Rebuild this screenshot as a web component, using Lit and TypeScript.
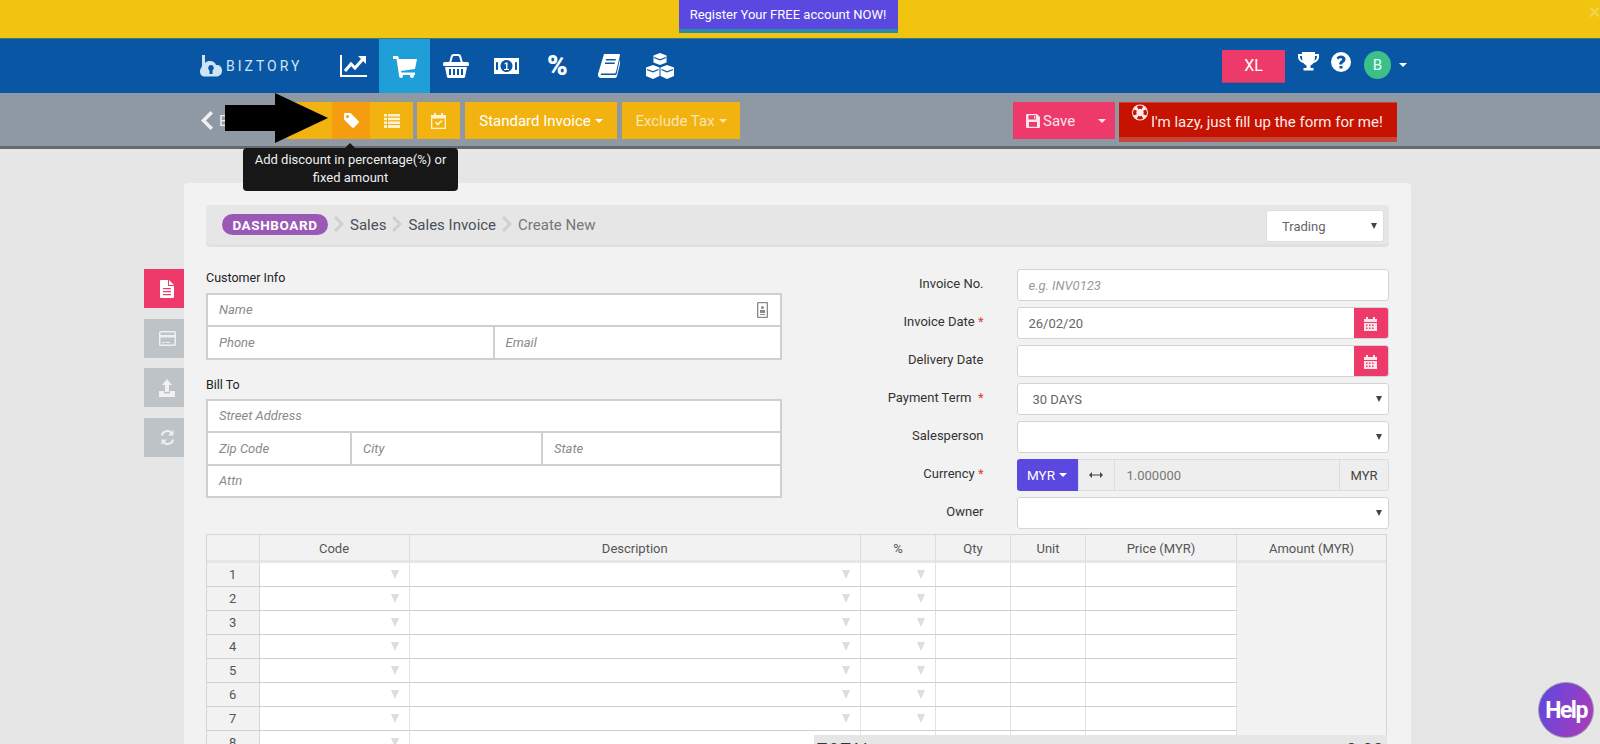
import { LitElement, html, css, svg } from "lit";
import { customElement } from "lit/decorators.js";

const ic = (w: number, h: number, vb: string, body: unknown) =>
  html`<svg width=${w} height=${h} viewBox=${vb} fill="currentColor" aria-hidden="true">${body}</svg>`;

const caret = html`<span class="caret"></span>`;
const tri = html`<span class="tri"></span>`;
const calendar = ic(13, 15, "0 0 13 15", svg`<path d="M0 3h2V1h2v2h5V1h2v2h2v3H0z"/><path fill-rule="evenodd" d="M0 7h13v8H0zM2 8.500v1.500h1.500V8.500zm3 0v1.500h1.500V8.500zm3 0v1.500h1.500V8.500zM2 11.500V13h1.500v-1.500zm3 0V13h1.500v-1.500zm3 0V13h1.500v-1.500z"/>`);
const chevron = html`<svg class="crumb-chev" width="10" height="16" viewBox="0 0 10 16"><path d="M1 1l7 7-7 7" fill="none" stroke="#cfcfcf" stroke-width="3"/></svg>`;

const navIcons = [
  ic(27, 24, "0 0 27 24", svg`<path d="M1 1v21h26" fill="none" stroke="currentColor" stroke-width="2"/><path d="M5 17l6-7 4 4 8-9" fill="none" stroke="currentColor" stroke-width="3"/><path d="M18 2h8v8z"/>`),
  ic(24, 23, "0 0 24 23", svg`<path d="M0 1h5l1 3h18l-2 10-14 2 .4 1.500H22V20H6L3.500 4H0z"/><circle cx="8" cy="21" r="2"/><circle cx="19" cy="21" r="2"/>`),
  ic(26, 24, "0 0 26 24", svg`<path d="M7 9l2-7a2 2 0 0 1 2-1h4a2 2 0 0 1 2 1l2 7" fill="none" stroke="currentColor" stroke-width="2"/><rect x="0" y="8" width="26" height="4" rx="1.500"/><path fill-rule="evenodd" d="M2 13h22l-2 10a1.500 1.500 0 0 1-1.500 1h-15A1.500 1.500 0 0 1 4 23zm4 2v6h2v-6zm4 0v6h2v-6zm4 0v6h2v-6zm4 0v6h2v-6z"/>`),
  ic(25, 16, "0 0 25 16", svg`<path fill-rule="evenodd" d="M0 0h25v16H0zM12.500 2C9 2 6.500 4.700 6.500 8s2.500 6 6 6 6-2.700 6-6-2.500-6-6-6zM2 4v8a3 3 0 0 1 2 0V4a3 3 0 0 1-2 0zm19 0v8a3 3 0 0 1 2 0V4a3 3 0 0 1-2 0z"/><path d="M12 4.500h1.500v6.500H15v1h-5v-1h2V6l-1.500.5v-1z"/>`),
  html`<span class="pct">%</span>`,
  ic(22, 24, "0 0 22 24", svg`<path fill-rule="evenodd" d="M6 0h15c1 0 1 1 1 1l-4 17c-.3 1-1 1.500-2 1.500H4c-1 0-1.500 1-1 1.500h14l1.500-.5L22 5l1 1-4 16c-.2 1-1 2-2 2H3c-2 0-3.500-2-3-4zM8 5v1.500h9.500L18 5zm-1 3.500V10h9.500l.5-1.500z"/>`),
  ic(28, 26, "0 0 28 26", svg`<path d="M14 0l6.500 2.500v7L14 12l-6.500-2.500v-7z"/><path d="M7 12l6.500 2.500v8.500L7 26 0 23v-8.500z"/><path d="M21 12l7 2.500V23l-7 3-6.500-3v-8.500z"/><path d="M8 4.500l6 2.300 6-2.300M1 16.500l6 2.300 5.500-2.300M15.500 16.500l5.500 2.300 6-2.300" stroke="#0957a4" fill="none" stroke-width="1.200"/>`),
];

const sideIcons = [
  ic(14, 18, "0 0 14 18", svg`<path d="M9 0l5 5H9z"/><path fill-rule="evenodd" d="M1 0h7v6h6v11a1 1 0 0 1-1 1H1a1 1 0 0 1-1-1V1a1 1 0 0 1 1-1zm2 8v1.200h8V8zm0 3v1.200h8V11zm0 3v1.200h8V14z"/>`),
  ic(17, 15, "0 0 17 15", svg`<path fill-rule="evenodd" d="M1.500 0h14A1.500 1.500 0 0 1 17 1.500v12a1.500 1.500 0 0 1-1.500 1.500h-14A1.500 1.500 0 0 1 0 13.500v-12A1.500 1.500 0 0 1 1.500 0zM1.500 1.500V4h14V1.500zm0 5v7h14v-7zM3 11h3v1H3zm4 0h4v1H7z"/>`),
  ic(16, 18, "0 0 16 18", svg`<path d="M8 0l5 6h-3v7H6V6H3zM0 12h5v2.500h6V12h5v6H0z"/>`),
  ic(15, 17, "0 0 15 17", svg`<path d="M13.500 1v5.500H8l2.200-2.200C9.500 3.500 8.600 3 7.500 3 5.200 3 3.500 4.500 3 6.500H.8C1.300 3.300 4.100 1 7.500 1c1.700 0 3.300.7 4.400 1.800zM1.500 16v-5.500H7l-2.200 2.200c.7.8 1.600 1.300 2.700 1.300 2.300 0 4-1.500 4.500-3.500h2.200C13.700 13.700 10.900 16 7.500 16c-1.700 0-3.300-.7-4.400-1.800z"/>`),
];

@customElement("app-root")
export class AppRoot extends LitElement {
  static styles = css`
    :host { display: block; height: 744px; overflow: hidden; background: #e6e6e6; font-family: Roboto, "Liberation Sans", sans-serif; position: relative; color: #333; }
    * { box-sizing: border-box; }
    .banner { height: 38px; background: #f1c40f; display: flex; justify-content: center; position: relative; }
    .register { width: 219px; height: 33px; background: #5b48e0; border-bottom: 4px solid #2b8aa8; color: #fff; font-size: 13px; display: flex; align-items: center; justify-content: center; margin-right: 24px; }
    .close { position: absolute; right: -1px; top: 3px; color: #f4d34e; font-size: 16px; font-weight: 700; }
    .nav { height: 55px; background: #0957a4; border-top: 1px solid #3f7a78; display: flex; align-items: center; padding-left: 200px; padding-right: 193px; color: #fff; }
    .logo { width: 128px; display: flex; align-items: center; gap: 3px; color: #cfe5f5; height: 100%; }
    .logo span { font-size: 14px; letter-spacing: 3px; font-weight: 400; }
    .cell { width: 51px; height: 100%; display: flex; align-items: center; justify-content: center; }
    .cell.on { background: #1f9ed8; }
    .pct { font-size: 28px; font-weight: 900; line-height: 1; }
    .nav-r { margin-left: auto; display: flex; align-items: center; }
    .xl { width: 63px; height: 33px; background: #ee3a6a; border-bottom: 1px solid #b83a70; color: #fff; font-size: 16px; display: flex; align-items: center; justify-content: center; }
    .trophy { margin-left: 13px; margin-top: -8px; display: flex; }
    .help-ic { margin-left: 12px; margin-top: -8px; display: flex; }
    .avatar { margin-left: 13px; width: 27px; height: 28px; border-radius: 50%; background: #3dbf8a; color: #e8fff4; font-size: 15px; display: flex; align-items: center; justify-content: center; margin-top: -2px; }
    .nav-r .caret { margin-left: 8px; margin-top: -2px; }
    .caret { display: inline-block; width: 0; height: 0; border-left: 4px solid transparent; border-right: 4px solid transparent; border-top: 4px solid currentColor; margin-left: 4px; vertical-align: middle; }

    .bar { height: 56px; background: #8e99a4; border-bottom: 3px solid #67696b; padding: 9px 203px 0 201px; display: flex; align-items: flex-start; color: #fff; }
    .back { width: 86px; height: 37px; display: flex; align-items: center; gap: 6px; font-size: 15px; color: #eef0f2; }
    .btn { height: 37px; background: #f2b310; color: #fdf3d4; display: flex; align-items: center; justify-content: center; font-size: 15px; }
    .group { display: flex; }
    .g0 { width: 45px; } .g1 { width: 38px; background: #f59c0f; color: #fff; } .g2 { width: 43px; }
    .cal { width: 43px; margin-left: 4px; }
    .std { width: 152px; margin-left: 5px; color: #fff; }
    .exc { width: 118px; margin-left: 5px; color: #f8e6b4; }
    .save { width: 102px; margin-left: auto; height: 37px; background: #ee3a6a; display: flex; align-items: center; padding-left: 13px; font-size: 15px; gap: 3px; color: #fbe4ea; }
    .save .caret { margin-left: auto; margin-right: 9px; }
    .lazy { width: 278px; height: 40px; margin-left: 4px; background: #c61200; border-bottom: 5px solid #c8453a; border-top: 1px solid #c8453a; display: flex; align-items: flex-start; padding: 1px 0 0 13px; font-size: 15px; color: #fbeae8; }
    .lazy span { margin: 9px 0 0 3px; white-space: nowrap; }

    .main { display: flex; padding: 34px 0 0 144px; }
    .tabs { width: 40px; padding-top: 86px; display: flex; flex-direction: column; gap: 10.500px; }
    .tab { height: 39px; background: #bdc3c7; color: #eef0f1; display: flex; align-items: center; justify-content: center; padding-left: 6px; }
    .tab.on { background: #ee3a6a; color: #fff; }
    .card { width: 1227px; height: 600px; background: #f2f2f2; border-radius: 4px 4px 0 0; padding: 22px 22px 0; }
    .crumbs { height: 42px; background: #e6e6e6; border-bottom: 3px solid #e0e0e0; border-radius: 4px; display: flex; align-items: center; padding: 0 5px 0 16px; font-size: 15px; color: #4a5058; }
    .pill { width: 106px; height: 21px; border-radius: 11px; background: #9b59b6; color: #fff; font-size: 13.500px; font-weight: 700; letter-spacing: .6px; display: flex; align-items: center; justify-content: center; margin-right: 6px; }
    .crumb-chev { margin: 0 6px 2px 0; flex: none; }
    .crumbs .s { margin-right: 6px; }
    .crumbs .s2 { margin-right: 6px; }
    .crumbs .last { color: #777; }
    .trade { margin-left: auto; margin-top: 3px; width: 118px; height: 32px; background: #fff; border: 1px solid #ddd; border-radius: 3px; display: flex; align-items: center; padding: 0 6px 0 15px; font-size: 13px; color: #666; justify-content: space-between; }
    .tri { width: 0; height: 0; border-left: 3px solid transparent; border-right: 3px solid transparent; border-top: 6px solid #444; }

    .forms { display: flex; justify-content: space-between; margin-top: 22px; height: 260px; margin-bottom: 5px; }
    .left { width: 576px; }
    .lab { font-size: 12.500px; color: #222; height: 23.500px; display: flex; align-items: center; padding-bottom: 7px; }
    .lab.b { margin-top: 16.500px; height: 16px; padding: 0; }
    .box { background: #cfcfcf; padding: 2px; display: flex; flex-direction: column; gap: 2px; }
    .box.bill { margin-top: 6.500px; }
    .rw { display: flex; gap: 2px; }
    .f { height: 30.500px; background: #fff; display: flex; align-items: center; padding: 0 11px; font-size: 13px; font-style: italic; color: #8a8a8a; flex: 1 1 0; justify-content: space-between; min-width: 0; }
    .box > .f { flex: none; }
    .phone { flex: 0 0 284.500px; } .zip { flex: 0 0 142px; } .city { flex: 0 0 189px; }
    .contact { color: #8a8a8a; margin-right: 1px; display: flex; }
    .right { width: 529px; display: grid; grid-template-columns: 123.500px 372.500px; column-gap: 33px; grid-auto-rows: 32px; row-gap: 6px; align-items: center; }
    .rl { text-align: right; font-size: 13px; color: #333; white-space: pre; padding-bottom: 3px; }
    .rl b { color: #e03a3a; font-weight: 400; }
    .inp { height: 32px; background: #fff; border: 1px solid #d4d4d4; border-radius: 3px; display: flex; align-items: center; font-size: 13px; color: #666; padding-left: 11px; overflow: hidden; }
    .inp.ph { font-style: italic; color: #9a9a9a; }
    .inp.sel { padding: 0 6px 0 15px; justify-content: space-between; }
    .inp.date { padding-right: 0; justify-content: space-between; }
    .calbtn { width: 35px; height: 32px; background: #ee3a6a; color: #fbe4ea; display: flex; align-items: center; justify-content: center; flex: none; margin-right: -1px; padding-right: 3px; }
    .cur { display: flex; height: 32px; border-radius: 3px; overflow: hidden; font-size: 13px; }
    .cur .m { width: 61px; background: #5b48e0; color: #fff; display: flex; align-items: center; justify-content: center; font-size: 13.500px; }
    .cur .x { width: 37px; background: #eee; border: 1px solid #ddd; display: flex; align-items: center; justify-content: center; color: #444; }
    .cur .r { flex: 1; background: #eee; border-top: 1px solid #ddd; border-bottom: 1px solid #ddd; display: flex; align-items: center; padding-left: 12px; color: #777; }
    .cur .u { width: 50px; background: #eee; border: 1px solid #ddd; display: flex; align-items: center; justify-content: center; color: #444; }

    .table { width: 1181px; border: 1px solid #d6d6d6; border-bottom: 0; position: relative; }
    .tr { display: grid; grid-template-columns: 52.500px 150px 451.500px 75px 75px 75px 151px 1fr; }
    .th { height: 27.500px; border-bottom: 3px solid #e6e6e6; border-right: 1px solid #dcdcdc; display: flex; align-items: center; justify-content: center; font-size: 13px; color: #555; background: #f2f2f2; padding-top: 2px; }
    .th:last-child { border-right: 0; }
    .td { height: 24.100px; border-bottom: 1px solid #cfcfcf; border-right: 1px solid #e2e2e2; background: #fff; display: flex; align-items: center; justify-content: flex-end; padding-right: 10px; }
    .td .tri { border-top-color: #ddd; border-left-width: 4px; border-right-width: 4px; border-top-width: 9px; }
    .td.n { background: #f2f2f2; border-right-color: #d6d6d6; justify-content: center; padding: 0; font-size: 13px; color: #555; }
    .td.a { background: #f2f2f2; border-bottom: 0; border-right: 0; }
    .total { position: absolute; left: 607px; right: -1px; top: 200px; height: 30px; background: #e6e6e6; display: flex; justify-content: space-between; padding: 4px 3px 0 3px; font-size: 17px; color: #333; letter-spacing: 1px; }

    .arrow { position: absolute; left: 225px; top: 93px; }
    .tip { position: absolute; left: 243px; top: 148px; width: 215px; height: 43px; background: #171717; border-radius: 4px; color: #eee; font-size: 13px; line-height: 18px; text-align: center; padding: 3px 8px; }
    .tip::before { content: ""; position: absolute; left: 102px; top: -5px; border-left: 5px solid transparent; border-right: 5px solid transparent; border-bottom: 5px solid #171717; }
    .helpb { position: absolute; left: 1538px; top: 682px; width: 56px; height: 56px; border-radius: 50%; background: linear-gradient(110deg, #5b48e0, #b03ab8); border: 1px solid #9a9aa8; color: #fff; font-size: 23px; font-weight: 700; letter-spacing: -1.500px; display: flex; align-items: center; justify-content: center; }
  `;

  render() {
    const rows = [1, 2, 3, 4, 5, 6, 7, 8];
    return html`
      <div class="banner"><div class="register">Register Your FREE account NOW!</div><span class="close">✕</span></div>
      <div class="nav">
        <div class="logo">
          ${ic(23, 22, "0 0 23 22", svg`<path fill-rule="evenodd" d="M2 0h3v8c1.500-1.500 3-2 5-2 3 0 5 1.500 6 4 3-.5 6 1.500 6 5.500 0 3.500-2 6-6 6H5c-3 0-5-2-5-5 0-2 1-4 2-5zM11 10a3 3 0 0 0-1.500 5.500V19h3v-3.500A3 3 0 0 0 11 10z"/>`)}
          <span>BIZTORY</span>
        </div>
        ${navIcons.map((i, n) => html`<div class="cell ${n === 1 ? "on" : ""}">${i}</div>`)}
        <div class="nav-r">
          <div class="xl">XL</div>
          <div class="trophy">${ic(21, 20, "0 0 21 20", svg`<path fill-rule="evenodd" d="M4 0h13v2h4v3c0 3-3 5.500-5.500 6-.8 1-1.800 2-3 2.500V16h3v2.500H5.500V16h3v-2.500c-1.200-.5-2.200-1.500-3-2.500C3 10.500 0 8 0 5V2h4zM2 4v1c0 1.500 1.200 3 2.700 3.700C4.200 7.500 4 5.800 4 4zm15 0c0 1.800-.2 3.500-.7 4.700C17.800 8 19 6.500 19 5V4z"/>`)}</div>
          <div class="help-ic">${ic(20, 20, "0 0 20 20", svg`<path fill-rule="evenodd" d="M10 0a10 10 0 1 1 0 20 10 10 0 0 1 0-20zM8.500 14v2.500h3V14zM10 3.500C7.800 3.500 6.300 4.500 5.500 6l2 1.500c.5-.8 1.200-1.300 2.200-1.300.9 0 1.500.5 1.500 1.100 0 1.500-3 1.700-3 4.700v.5h3c0-2 3.300-2 3.300-5.300 0-2.500-2.200-3.700-4.500-3.700z"/>`)}</div>
          <div class="avatar">B</div>
          ${caret}
        </div>
      </div>
      <div class="bar">
        <div class="back">
          ${ic(12, 19, "0 0 12 19", svg`<path d="M9.500 0L12 2.500 5 9.500l7 7L9.500 19 0 9.500z"/>`)}
          <span>Back</span>
        </div>
        <div class="group">
          <div class="btn g0"></div>
          <div class="btn g1">${ic(15, 15, "0 0 15 15", svg`<path fill-rule="evenodd" d="M1 0h5.500L14.500 8a1.500 1.500 0 0 1 0 2l-4.500 4.500a1.500 1.500 0 0 1-2 0L0 6.500V1a1 1 0 0 1 1-1zm2.500 2a1.500 1.500 0 1 0 0 3 1.500 1.500 0 0 0 0-3z"/>`)}</div>
          <div class="btn g2">${ic(16, 14, "0 0 16 14", svg`<path d="M0 0h3v2.500H0zM4 0h12v2.500H4zM0 3.700h3v2.500H0zM4 3.700h12v2.500H4zM0 7.400h3v2.500H0zM4 7.400h12v2.500H4zM0 11.100h3V14H0zM4 11.100h12V14H4z"/>`)}</div>
        </div>
        <div class="btn cal">${ic(15, 16, "0 0 15 16", svg`<path fill-rule="evenodd" d="M0 2h3V0h2v2h5V0h2v2h3v14H0zM1.300 5.500v9.200h12.400V5.500zM4 9.500l1-1 1.800 1.800L10.500 7l1 1-4.700 4.700z"/>`)}</div>
        <div class="btn std">Standard Invoice${caret}</div>
        <div class="btn exc">Exclude Tax${caret}</div>
        <div class="save">
          ${ic(14, 14, "0 0 14 14", svg`<path fill-rule="evenodd" d="M1 0h10l3 3v10a1 1 0 0 1-1 1H1a1 1 0 0 1-1-1V1a1 1 0 0 1 1-1zm1.500 1.300v4.200h7.500V1.300zM3 8v4.700h8V8zm5-6h1.300v2.500H8z"/>`)}
          Save${caret}
        </div>
        <div class="lazy">
          ${ic(16, 17, "0 0 16 17", svg`<path fill-rule="evenodd" d="M8 .5a8 8 0 1 1 0 16 8 8 0 0 1 0-16zm-3 1.800 1.200 3a3.500 3.500 0 0 1 3.600 0l1.200-3a6.500 6.500 0 0 0-6 0zM1.800 5.500l3 1.200a3.500 3.500 0 0 0 0 3.600l-3 1.200a6.500 6.500 0 0 1 0-6zm12.400 0a6.500 6.500 0 0 1 0 6l-3-1.200a3.500 3.500 0 0 0 0-3.600zM6.200 11.700l-1.200 3a6.500 6.500 0 0 0 6 0l-1.200-3a3.500 3.500 0 0 1-3.600 0z"/>`)}
          <span>I'm lazy, just fill up the form for me!</span>
        </div>
      </div>
      <div class="main">
        <div class="tabs">${sideIcons.map((i, n) => html`<div class="tab ${n === 0 ? "on" : ""}">${i}</div>`)}</div>
        <div class="card">
          <div class="crumbs">
            <div class="pill">DASHBOARD</div>${chevron}
            <span class="s">Sales</span>${chevron}
            <span class="s2">Sales Invoice</span>${chevron}
            <span class="last">Create New</span>
            <div class="trade">Trading${tri}</div>
          </div>
          <div class="forms">
            <div class="left">
              <div class="lab">Customer Info</div>
              <div class="box">
                <div class="f">Name<span class="contact">${ic(11, 16, "0 0 11 16", svg`<path fill-rule="evenodd" d="M1 0h9a1 1 0 0 1 1 1v14a1 1 0 0 1-1 1H1a1 1 0 0 1-1-1V1a1 1 0 0 1 1-1zm.3 1.300v13.400h8.400V1.300zM5.500 4a1.500 1.500 0 1 1 0 3 1.500 1.500 0 0 1 0-3zM3 8h5v3H3zm0 4h5v1H3z"/>`)}</span></div>
                <div class="rw"><div class="f phone">Phone</div><div class="f">Email</div></div>
              </div>
              <div class="lab b">Bill To</div>
              <div class="box bill">
                <div class="f">Street Address</div>
                <div class="rw"><div class="f zip">Zip Code</div><div class="f city">City</div><div class="f">State</div></div>
                <div class="f">Attn</div>
              </div>
            </div>
            <div class="right">
              <div class="rl">Invoice No.</div><div class="inp ph">e.g. INV0123</div>
              <div class="rl">Invoice Date <b>*</b></div><div class="inp date">26/02/20<div class="calbtn">${calendar}</div></div>
              <div class="rl">Delivery Date</div><div class="inp date"><span></span><div class="calbtn">${calendar}</div></div>
              <div class="rl">Payment Term  <b>*</b></div><div class="inp sel">30 DAYS${tri}</div>
              <div class="rl">Salesperson</div><div class="inp sel"><span></span>${tri}</div>
              <div class="rl">Currency <b>*</b></div>
              <div class="cur">
                <div class="m">MYR${caret}</div>
                <div class="x">${ic(14, 6, "0 0 14 6", svg`<path d="M0 3l3-3v2.500h8V0l3 3-3 3V3.500H3V6z"/>`)}</div>
                <div class="r">1.000000</div>
                <div class="u">MYR</div>
              </div>
              <div class="rl">Owner</div><div class="inp sel"><span></span>${tri}</div>
            </div>
          </div>
          <div class="table">
            <div class="tr">
              ${["", "Code", "Description", "%", "Qty", "Unit", "Price (MYR)", "Amount (MYR)"].map(h => html`<div class="th">${h}</div>`)}
            </div>
            ${rows.map(r => html`<div class="tr">
              <div class="td n">${r}</div>
              <div class="td">${tri}</div>
              <div class="td">${tri}</div>
              <div class="td">${tri}</div>
              <div class="td"></div>
              <div class="td"></div>
              <div class="td"></div>
              <div class="td a"></div>
            </div>`)}
            <div class="total"><span>TOTAL</span><span>0.00</span></div>
          </div>
        </div>
      </div>
      <svg class="arrow" width="104" height="51" viewBox="0 0 104 51"><path d="M0 12h50V0l53 25-53 25V38H0z" fill="#000"/></svg>
      <div class="tip">Add discount in percentage(%) or fixed amount</div>
      <div class="helpb">Help</div>
    `;
  }
}
